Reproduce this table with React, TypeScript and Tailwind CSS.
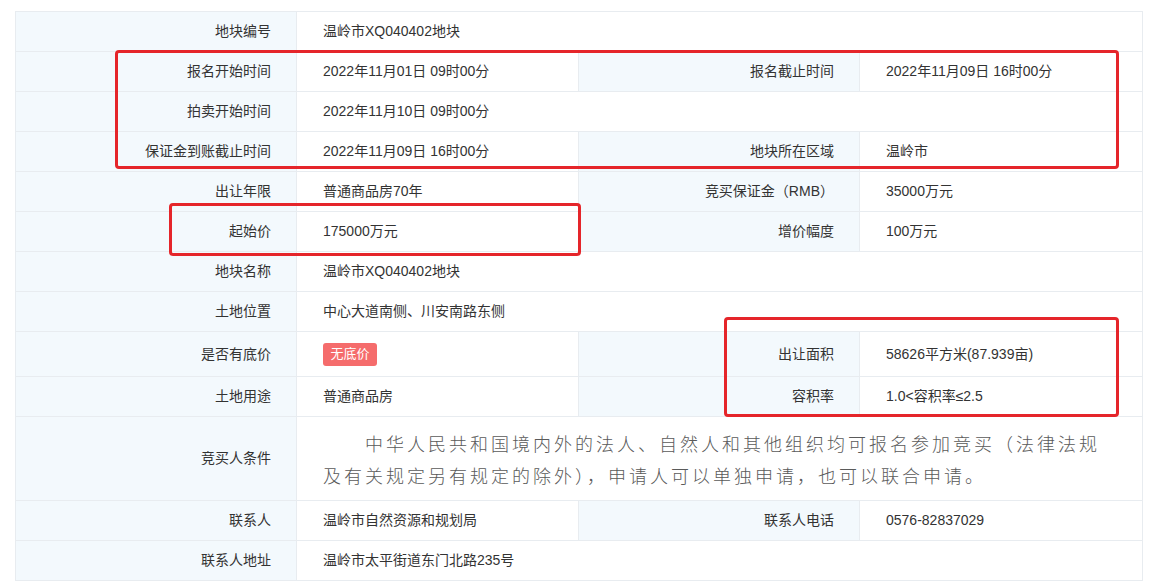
import React from "react";

const font = { fontFamily: '"Liberation Sans", "Noto Sans CJK SC", sans-serif' };

function Label({ children }: { children?: React.ReactNode }) {
  return (
    <div className="w-[281px] shrink-0 bg-[#f3f9fd] border-r border-[#e8ecf0] flex items-center justify-end pr-[25px] text-[14px] text-[#333]">
      {children}
    </div>
  );
}

function Value({ children, wide }: { children?: React.ReactNode; wide?: boolean }) {
  return (
    <div
      className={
        (wide ? "flex-1" : "w-[282px] shrink-0 border-r border-[#e8ecf0]") +
        " flex items-center pl-[26px] text-[14px] text-[#333]"
      }
    >
      {children}
    </div>
  );
}

function Row({ h = "h-[40px]", children }: { h?: string; children: React.ReactNode }) {
  return <div className={"flex border-b border-[#e8ecf0] " + h}>{children}</div>;
}

export default function App() {
  return (
    <div className="w-[1154px] h-[588px] bg-white relative overflow-hidden" style={font}>
      <div className="pt-[11px] pl-[15px]">
        <div className="w-[1128px] border-l border-r border-t border-[#e8ecf0]">
          <Row>
            <Label>地块编号</Label>
            <Value wide>温岭市XQ040402地块</Value>
          </Row>
          <Row>
            <Label>报名开始时间</Label>
            <Value>2022年11月01日 09时00分</Value>
            <Label>报名截止时间</Label>
            <Value wide>2022年11月09日 16时00分</Value>
          </Row>
          <Row>
            <Label>拍卖开始时间</Label>
            <Value wide>2022年11月10日 09时00分</Value>
          </Row>
          <Row>
            <Label>保证金到账截止时间</Label>
            <Value>2022年11月09日 16时00分</Value>
            <Label>地块所在区域</Label>
            <Value wide>温岭市</Value>
          </Row>
          <Row>
            <Label>出让年限</Label>
            <Value>普通商品房70年</Value>
            <Label>竞买保证金（RMB）</Label>
            <Value wide>35000万元</Value>
          </Row>
          <Row>
            <Label>起始价</Label>
            <Value>175000万元</Value>
            <Label>增价幅度</Label>
            <Value wide>100万元</Value>
          </Row>
          <Row>
            <Label>地块名称</Label>
            <Value wide>温岭市XQ040402地块</Value>
          </Row>
          <Row>
            <Label>土地位置</Label>
            <Value wide>中心大道南侧、川安南路东侧</Value>
          </Row>
          <Row h="h-[45px]">
            <Label>是否有底价</Label>
            <Value>
              <span className="inline-flex items-center justify-center w-[54px] h-[23px] rounded-[3px] bg-[#f56c6c] text-white text-[13px]">
                无底价
              </span>
            </Value>
            <Label>出让面积</Label>
            <Value wide>58626平方米(87.939亩)</Value>
          </Row>
          <Row>
            <Label>土地用途</Label>
            <Value>普通商品房</Value>
            <Label>容积率</Label>
            <Value wide>1.0&lt;容积率≤2.5</Value>
          </Row>
          <Row h="h-[84px]">
            <Label>竞买人条件</Label>
            <div className="flex-1 flex flex-col justify-center pl-[26px] text-[18px] leading-[32px] tracking-[3px] text-[#5a5a5a] font-light" style={{ fontFamily: '"Noto Sans CJK SC", sans-serif' }}>
              <span className="whitespace-nowrap">　　中华人民共和国境内外的法人、自然人和其他组织均可报名参加竞买（法律法规</span>
              <span className="whitespace-nowrap">及有关规定另有规定的除外），申请人可以单独申请，也可以联合申请。</span>
            </div>
          </Row>
          <Row>
            <Label>联系人</Label>
            <Value>温岭市自然资源和规划局</Value>
            <Label>联系人电话</Label>
            <Value wide>0576-82837029</Value>
          </Row>
          <Row>
            <Label>联系人地址</Label>
            <Value wide>温岭市太平街道东门北路235号</Value>
          </Row>
        </div>
      </div>

      <div className="absolute left-[115px] top-[50px] w-[1004px] h-[119px] border-[3px] border-[#e5252a] rounded-[4px]" />
      <div className="absolute left-[169px] top-[203px] w-[412px] h-[53px] border-[3px] border-[#e5252a] rounded-[4px]" />
      <div className="absolute left-[724px] top-[317px] w-[395px] h-[100px] border-[3px] border-[#e5252a] rounded-[4px]" />
    </div>
  );
}
